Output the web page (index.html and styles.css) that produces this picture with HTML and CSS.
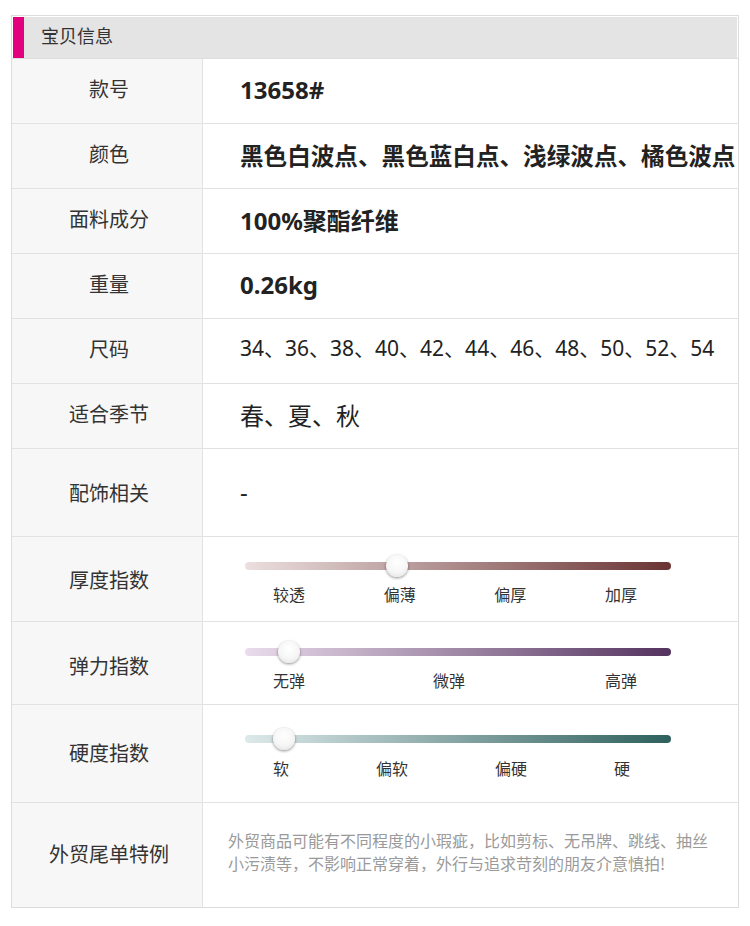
FILE: index.html
```html
<!DOCTYPE html>
<html lang="zh-CN">
<head>
<meta charset="utf-8">
<title>宝贝信息</title>
<link rel="stylesheet" href="styles.css">
</head>
<body>
<div class="spec">
  <div class="spec-head">
    <div class="head-bar"><span class="head-mark"></span><span class="head-title">宝贝信息</span></div>
  </div>
  <div class="row h65"><div class="label">款号</div><div class="value v-big v-bold">13658#</div></div>
  <div class="row h65"><div class="label">颜色</div><div class="value v-colors v-bold">黑色白波点、黑色蓝白点、浅绿波点、橘色波点</div></div>
  <div class="row h65"><div class="label">面料成分</div><div class="value v-big v-bold">100%聚酯纤维</div></div>
  <div class="row h65"><div class="label">重量</div><div class="value v-big v-bold">0.26kg</div></div>
  <div class="row h65"><div class="label">尺码</div><div class="value v-sizes">34、36、38、40、42、44、46、48、50、52、54</div></div>
  <div class="row h65"><div class="label">适合季节</div><div class="value v-big">春、夏、秋</div></div>
  <div class="row h88"><div class="label lb-1">配饰相关</div><div class="value v-big">-</div></div>
  <div class="row h85">
    <div class="label lb-0">厚度指数</div>
    <div class="value slider-cell pt18">
      <div class="slider"><div class="track track-red"></div><span class="knob" style="left:35.6%"></span></div>
      <div class="ticks"><span>较透</span><span>偏薄</span><span>偏厚</span><span>加厚</span></div>
    </div>
  </div>
  <div class="row h83">
    <div class="label lb-down">弹力指数</div>
    <div class="value slider-cell pt19">
      <div class="slider"><div class="track track-purple"></div><span class="knob" style="left:10.3%"></span></div>
      <div class="ticks"><span>无弹</span><span class="tick-shift">微弹</span><span>高弹</span></div>
    </div>
  </div>
  <div class="row h98">
    <div class="label lb-3">硬度指数</div>
    <div class="value slider-cell pt23 gap10">
      <div class="slider"><div class="track track-teal"></div><span class="knob" style="left:9.2%"></span></div>
      <div class="ticks ticks-short"><span>软</span><span>偏软</span><span>偏硬</span><span>硬</span></div>
    </div>
  </div>
  <div class="row h104 last">
    <div class="label lb-3">外贸尾单特例</div>
    <div class="value v-note">外贸商品可能有不同程度的小瑕疵，比如剪标、无吊牌、跳线、抽丝小污渍等，不影响正常穿着，外行与追求苛刻的朋友介意慎拍!</div>
  </div>
</div>
</body>
</html>
```
FILE: styles.css
```css
* { box-sizing: border-box; }
html, body { margin: 0; padding: 0; background: #fff; }
body {
  font-family: "Noto Sans", "Noto Sans CJK SC", sans-serif;
  color: #333;
}
.spec {
  margin: 15px 0 0 11px;
  width: 728px;
  border: 1px solid #dcdcdc;
}
.spec-head {
  padding: 1px 1px 0 1px;
  height: 43px;
  border-bottom: 1px solid #dedede;
}
.head-bar {
  height: 41px;
  background: #e4e4e4;
  display: flex;
  align-items: stretch;
}
.head-mark {
  width: 11px;
  background: #e3007d;
}
.head-title {
  margin-left: 17px;
  display: flex;
  align-items: center;
  padding-bottom: 6px;
  font-family: "Noto Sans CJK SC", sans-serif;
  font-size: 18px;
  color: #333;
}
.row {
  display: grid;
  grid-template-columns: 191px 1fr;
  border-bottom: 1px solid #e2e2e2;
}
.row.last { border-bottom: none; }
.h65 { height: 65px; }
.h88 { height: 88px; }
.h85 { height: 85px; }
.h83 { height: 83px; }
.h98 { height: 98px; }
.h104 { height: 104px; }
.label {
  background: #f7f7f7;
  border-right: 1px solid #e2e2e2;
  display: flex;
  align-items: center;
  justify-content: center;
  padding-left: 4px;
  padding-bottom: 5px;
  font-family: "Noto Sans CJK SC", sans-serif;
  font-size: 20px;
  color: #333;
}
.label.lb-1 { padding-bottom: 1px; }
.label.lb-0 { padding-bottom: 0; padding-top: 1px; }
.label.lb-down { padding-bottom: 0; padding-top: 5px; }
.label.lb-3 { padding-bottom: 3px; }
.value {
  display: flex;
  align-items: center;
  padding-left: 37px;
  padding-bottom: 3px;
  color: #222;
  white-space: nowrap;
}
.v-big { font-size: 24px; }
.v-bold { font-weight: 700; }
.v-colors { font-size: 23.6px; }
.v-sizes { font-size: 21px; padding-bottom: 8px; }
.v-note {
  padding-left: 25px;
  padding-right: 28px;
  padding-bottom: 6px;
  white-space: normal;
  font-family: "Noto Sans CJK SC", sans-serif;
  font-size: 16px;
  line-height: 23px;
  color: #9a9a9a;
}
.slider-cell {
  flex-direction: column;
  align-items: flex-start;
  padding-left: 42px;
  padding-bottom: 0;
}
.pt18 { padding-top: 18px; }
.pt19 { padding-top: 19px; }
.pt23 { padding-top: 23px; }
.slider {
  position: relative;
  width: 426px;
  height: 22px;
  display: flex;
  align-items: center;
}
.track {
  width: 100%;
  height: 8px;
  border-radius: 4px;
}
.track-red { background: linear-gradient(to right, #ecdfdf, #6a3333); }
.track-purple { background: linear-gradient(to right, #eadcec, #54335f); }
.track-teal { background: linear-gradient(to right, #dde9ea, #2e605d); }
.knob {
  position: absolute;
  top: 0;
  width: 22px;
  height: 22px;
  margin-left: -11px;
  border-radius: 50%;
  background: radial-gradient(circle at 50% 35%, #ffffff 0%, #f6f6f6 55%, #dcdcdc 100%);
  box-shadow: 0 1px 3px rgba(0, 0, 0, 0.45);
}
.ticks {
  margin-top: 7px;
  margin-left: 28px;
  width: 364px;
  display: flex;
  justify-content: space-between;
  font-family: "Noto Sans CJK SC", sans-serif;
  font-size: 16px;
  line-height: 20px;
  color: #333;
}
.gap10 .ticks { margin-top: 8px; }
.ticks-short { padding-right: 7px; }
.tick-shift { margin-right: 12px; }
```
